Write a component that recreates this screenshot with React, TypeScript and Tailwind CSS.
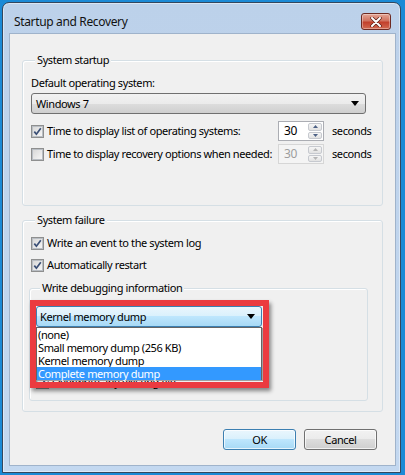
import React from 'react'

function Check({ checked }: { checked?: boolean }) {
  return (
    <span className="flex h-[13px] w-[13px] shrink-0 items-center justify-center border border-[#8e8f8f] bg-[#f4f4f4]">
      <span className="flex h-[11px] w-[11px] items-center justify-center border border-[#b9bec4] bg-[linear-gradient(135deg,#d8d8d8,#f6f6f6)]">
        {checked && (
          <svg width="9" height="9" viewBox="0 0 9 9">
            <path d="M1.3 4.6 L3.4 7.2 L7.8 1.2" fill="none" stroke="#3a4f76" strokeWidth="1.7" />
          </svg>
        )}
      </span>
    </span>
  )
}

function Arrow() {
  return (
    <svg width="8" height="5" viewBox="0 0 8 5">
      <path d="M0 0 H8 L4 5 Z" fill="#000" />
    </svg>
  )
}

function Spin({ disabled }: { disabled?: boolean }) {
  const arrow = disabled ? '#b5b5b5' : '#4d6185'
  return (
    <div
      className={`flex h-[20px] w-[46px] items-stretch border ${
        disabled ? 'border-[#d6d6d6] bg-[#f4f4f4] text-[#9d9d9d]' : 'border-[#abadb3] bg-white text-black'
      }`}
    >
      <span className="flex-1 pl-[5px] text-[12px] leading-[18px]">30</span>
      <div className="flex w-[15px] flex-col gap-px py-px pr-px">
        <span className="flex flex-1 items-center justify-center rounded-[2px] border border-[#c6c9cf] bg-[linear-gradient(#f6f6f6,#e2e2e2)]">
          <svg width="5" height="3" viewBox="0 0 5 3">
            <path d="M0 3 L2.5 0 L5 3 Z" fill={arrow} />
          </svg>
        </span>
        <span className="flex flex-1 items-center justify-center rounded-[2px] border border-[#c6c9cf] bg-[linear-gradient(#f6f6f6,#e2e2e2)]">
          <svg width="5" height="3" viewBox="0 0 5 3">
            <path d="M0 0 L2.5 3 L5 0 Z" fill={arrow} />
          </svg>
        </span>
      </div>
    </div>
  )
}

function Legend({ children }: { children: React.ReactNode }) {
  return <div className="-mt-[9px] ml-[4px] w-fit bg-[#f0f0f0] px-[2px] leading-[16px]">{children}</div>
}

export default function App() {
  return (
    <div className="h-[475px] w-[405px] overflow-hidden bg-[#1b8ad6] pb-[2px] pl-[2px] pr-[4px] pt-[2px] font-['Noto_Sans',sans-serif] text-[11px] tracking-[-0.4px] text-black">
      <div className="flex h-full flex-col rounded-t-[7px] border border-[#33475e] bg-[linear-gradient(#bcd1ea,#c3d8f0)] shadow-[inset_0_0_0_1px_rgba(255,255,255,0.45)]">
        {/* Title bar */}
        <div className="flex h-[30px] items-start justify-between pl-[11px] pr-[9px]">
          <span className="mt-[11px] text-[12px] leading-[16px] tracking-[-0.35px] text-[#111]">Startup and Recovery</span>
          <div className="mt-[10px] flex h-[17px] w-[30px] items-center justify-center rounded-[3px] border border-[#6e2a22] bg-[linear-gradient(#e4a596,#d0725f_45%,#c2402c_55%,#d26a52)] shadow-[inset_0_0_0_1px_rgba(255,255,255,0.35)]">
            <svg width="12" height="10" viewBox="0 0 12 10">
              <path d="M2 1 L10 9 M10 1 L2 9" stroke="#5a1d16" strokeWidth="3.4" strokeLinecap="round" />
              <path d="M2 1 L10 9 M10 1 L2 9" stroke="#fff" strokeWidth="2" strokeLinecap="round" />
            </svg>
          </div>
        </div>

        {/* Client area */}
        <div className="mb-[6px] ml-[6px] mr-[4px] flex flex-1 flex-col border border-[#9fb3cb] bg-[#f0f0f0] px-[12px] pt-[26px]">
          {/* System startup */}
          <div className="rounded-[3px] border border-[#d5dfe5] pb-[41px] pl-[8px] pr-[16px] shadow-[inset_1px_1px_0_#fff]">
            <Legend>System startup</Legend>
            <div className="mt-[7px] leading-[16px]">Default operating system:</div>
            <div className="mt-[2px] flex h-[21px] items-center justify-between rounded-[3px] border border-[#707070] bg-[linear-gradient(#f2f2f2,#ebebeb_50%,#dddddd_50%,#cfcfcf)] pl-[4px] pr-[6px]">
              <span className="leading-[16px]">Windows 7</span>
              <Arrow />
            </div>
            <div className="mt-[7px] grid grid-cols-[247px_46px_auto] items-center">
              <label className="flex items-center gap-[3px] whitespace-nowrap leading-[16px]">
                <Check checked />
                <span>Time to display list of operating systems:</span>
              </label>
              <Spin />
              <span className="ml-[8px] leading-[16px]">seconds</span>
            </div>
            <div className="mt-[3px] grid grid-cols-[247px_46px_auto] items-center">
              <label className="flex items-center gap-[3px] whitespace-nowrap leading-[16px]">
                <Check />
                <span>Time to display recovery options when needed:</span>
              </label>
              <Spin disabled />
              <span className="ml-[8px] leading-[16px]">seconds</span>
            </div>
          </div>

          {/* System failure */}
          <div className="mt-[14px] rounded-[3px] border border-[#d5dfe5] pb-[10px] pl-[8px] pr-[16px] shadow-[inset_1px_1px_0_#fff]">
            <Legend>System failure</Legend>
            <label className="mt-[7px] flex items-center gap-[3px] leading-[16px]">
              <Check checked />
              <span>Write an event to the system log</span>
            </label>
            <label className="mt-[6px] flex items-center gap-[3px] leading-[16px]">
              <Check checked />
              <span>Automatically restart</span>
            </label>

            {/* Write debugging information */}
            <div className="relative -ml-[2px] -mr-[2px] mt-[15px] rounded-[3px] border border-[#d5dfe5] pb-[10px] pl-[6px] pr-[10px] shadow-[inset_1px_1px_0_#fff]">
              <Legend>Write debugging information</Legend>
              <div className="mt-[10px] flex h-[21px] w-[226px] items-center justify-between rounded-[3px] border border-[#3c7fb1] bg-[linear-gradient(#eaf6fd,#d9f0fc_50%,#bee6fd_50%,#a7d9f5)] pl-[3px] pr-[6px]">
                <span className="leading-[16px]">Kernel memory dump</span>
                <Arrow />
              </div>
              <div className="mt-[5px] leading-[16px]">Dump file:</div>
              <div className="mt-[1px] h-[20px] w-[229px] border border-[#abadb3] bg-white pl-[3px] leading-[18px]">
                %SystemRoot%\MEMORY.DMP
              </div>
              <label className="mt-[5px] flex items-center gap-[3px] leading-[16px]">
                <Check checked />
                <span>Overwrite any existing file</span>
              </label>

              {/* Open drop-down list */}
              <div className="absolute left-[6px] top-[38px] flex h-[53px] w-[226px] flex-col border border-[#646464] bg-white leading-[13px] shadow-[1px_1px_0_#a0a0a0]">
                <span className="pl-[1px]">(none)</span>
                <span className="pl-[1px]">Small memory dump (256 KB)</span>
                <span className="pl-[1px]">Kernel memory dump</span>
                <span className="bg-[#3399ff] pl-[1px] text-white">Complete memory dump</span>
              </div>

              {/* Red highlight frame */}
              <div className="pointer-events-none absolute left-[0px] top-[11px] h-[88px] w-[239px] border-[6px] border-[#eb3b40] shadow-[2px_3px_4px_rgba(0,0,0,0.45)]" />
            </div>
          </div>

          {/* Buttons */}
          <div className="mt-[17px] flex justify-end gap-[8px] pr-[6px]">
            <button className="h-[21px] w-[73px] rounded-[3px] border border-[#3c7fb1] bg-[linear-gradient(#eaf6fd,#d9f0fc_50%,#bee6fd_50%,#a7d9f5)] leading-[16px] shadow-[inset_0_0_0_1px_rgba(255,255,255,0.7)]">
              OK
            </button>
            <button className="h-[21px] w-[73px] rounded-[3px] border border-[#707070] bg-[linear-gradient(#f2f2f2,#ebebeb_50%,#dddddd_50%,#cfcfcf)] leading-[16px] shadow-[inset_0_0_0_1px_rgba(255,255,255,0.7)]">
              Cancel
            </button>
          </div>
        </div>
      </div>
    </div>
  )
}
